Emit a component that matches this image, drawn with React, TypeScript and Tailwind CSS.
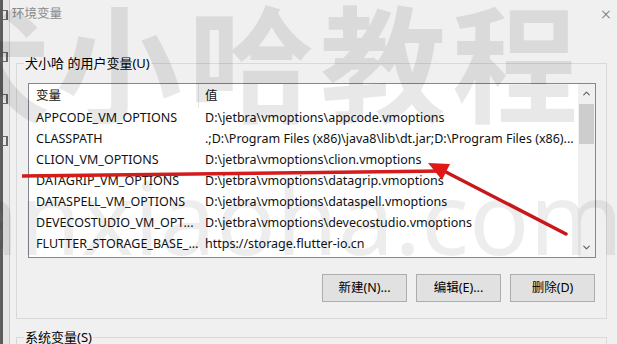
import { ChevronUp, ChevronDown } from 'lucide-react';

const rows = [
  { name: 'APPCODE_VM_OPTIONS', value: 'D:\\jetbra\\vmoptions\\appcode.vmoptions' },
  { name: 'CLASSPATH', value: '.;D:\\Program Files (x86)\\java8\\lib\\dt.jar;D:\\Program Files (x86)...' },
  { name: 'CLION_VM_OPTIONS', value: 'D:\\jetbra\\vmoptions\\clion.vmoptions' },
  { name: 'DATAGRIP_VM_OPTIONS', value: 'D:\\jetbra\\vmoptions\\datagrip.vmoptions' },
  { name: 'DATASPELL_VM_OPTIONS', value: 'D:\\jetbra\\vmoptions\\dataspell.vmoptions' },
  { name: 'DEVECOSTUDIO_VM_OPT...', value: 'D:\\jetbra\\vmoptions\\devecostudio.vmoptions' },
  { name: 'FLUTTER_STORAGE_BASE_...', value: 'https://storage.flutter-io.cn' },
];

const font = "font-['Noto_Sans','Noto_Sans_CJK_SC',sans-serif]";

function Button({ label }: { label: string }) {
  return (
    <div className="w-[85px] h-[28px] bg-[#e1e1e1] border border-[#adadad] flex items-center justify-center text-[12.5px] text-black">
      {label}
    </div>
  );
}

export default function App() {
  return (
    <div className={`w-[617px] h-[344px] relative overflow-hidden bg-[#f0f0f0] flex ${font}`}>
      {/* background window edge */}
      <div className="w-[3px] shrink-0 bg-[#5c5c5c]" />
      <div className="w-[7px] shrink-0 bg-[#e6e6e6] border-r border-[#c9c9c9] flex flex-col gap-[32px] pt-[10px]">
        <div className="w-[5px] h-[10px] border-r-2 border-y border-[#666]" />
        <div className="w-[5px] h-[10px] border-r-2 border-y border-[#666]" />
        <div className="w-[5px] h-[10px] border-r-2 border-y border-[#666]" />
        <div className="w-[5px] h-[10px] border-r-2 border-y border-[#666]" />
      </div>

      {/* dialog */}
      <div className="flex-1 flex flex-col">
        <div className="h-[28px] shrink-0 flex items-center justify-between pl-[2px] pr-[6px]">
          <span className="text-[12.5px] text-[#8a8a8a]">环境变量</span>
          <span className="text-[18px] text-[#777] font-light leading-none">×</span>
        </div>

        {/* user variables */}
        <div className="shrink-0 mt-[35px] ml-[6px] mr-[10px] h-[256px] border border-[#d9d9d9] relative">
          <span className="absolute -top-[10px] left-[7px] px-[1px] bg-[#f0f0f0] text-[13px] text-black leading-[18px]">
            犬小哈 的用户变量(U)
          </span>
          <div className="mt-[19px] ml-[11px] mr-[10px] h-[175px] border border-[#828790] bg-white flex">
            <div className="flex-1 flex flex-col text-[12.5px] text-[#111]">
              <div className="h-[24px] shrink-0 flex items-center">
                <div className="w-[170px] pl-[7px] border-r border-[#e5e5e5] h-full flex items-center">变量</div>
                <div className="pl-[6px]">值</div>
              </div>
              {rows.map((r) => (
                <div key={r.name} className="h-[21px] shrink-0 flex items-center whitespace-nowrap">
                  <div className="w-[170px] pl-[7px]">{r.name}</div>
                  <div className="pl-[6px]">{r.value}</div>
                </div>
              ))}
            </div>
            <div className="w-[17px] bg-[#f0f0f0] flex flex-col items-center justify-between py-[4px]">
              <div className="flex flex-col items-center w-full">
                <ChevronUp className="w-[11px] h-[11px] text-[#606060]" strokeWidth={2.5} />
                <div className="mt-[5px] w-[15px] h-[40px] bg-[#cdcdcd]" />
              </div>
              <ChevronDown className="w-[11px] h-[11px] text-[#606060]" strokeWidth={2.5} />
            </div>
          </div>
          <div className="mt-[16px] mr-[11px] flex justify-end gap-[9px]">
            <Button label="新建(N)..." />
            <Button label="编辑(E)..." />
            <Button label="删除(D)" />
          </div>
        </div>

        {/* system variables */}
        <div className="shrink-0 mt-[18px] ml-[6px] mr-[10px] h-[40px] border border-[#d9d9d9] relative">
          <span className="absolute -top-[10px] left-[7px] px-[1px] bg-[#f0f0f0] text-[13px] text-black leading-[18px]">
            系统变量(S)
          </span>
        </div>
      </div>

      {/* watermark */}
      <div className="absolute -left-[76px] -top-[5px] text-[126px] font-bold leading-none tracking-[6px] text-black/[0.09] whitespace-nowrap pointer-events-none font-['Noto_Sans_CJK_SC',sans-serif]">
        犬小哈教程
      </div>
      <div className="absolute -right-[6px] top-[166px] text-[100px] leading-none text-black/[0.07] whitespace-nowrap pointer-events-none font-['Noto_Sans',sans-serif]">
        quanxiaoha.com
      </div>

      {/* red annotation */}
      <svg className="absolute inset-0 pointer-events-none" width="617" height="344" viewBox="0 0 617 344">
        <line x1="22" y1="176" x2="444" y2="171" stroke="#d41c1c" strokeWidth="3.5" />
        <line x1="566" y1="234" x2="442" y2="170" stroke="#c8181c" strokeWidth="3.5" strokeLinecap="round" />
        <polygon points="428,163 450,164 442,180" fill="#e01818" />
      </svg>
    </div>
  );
}
